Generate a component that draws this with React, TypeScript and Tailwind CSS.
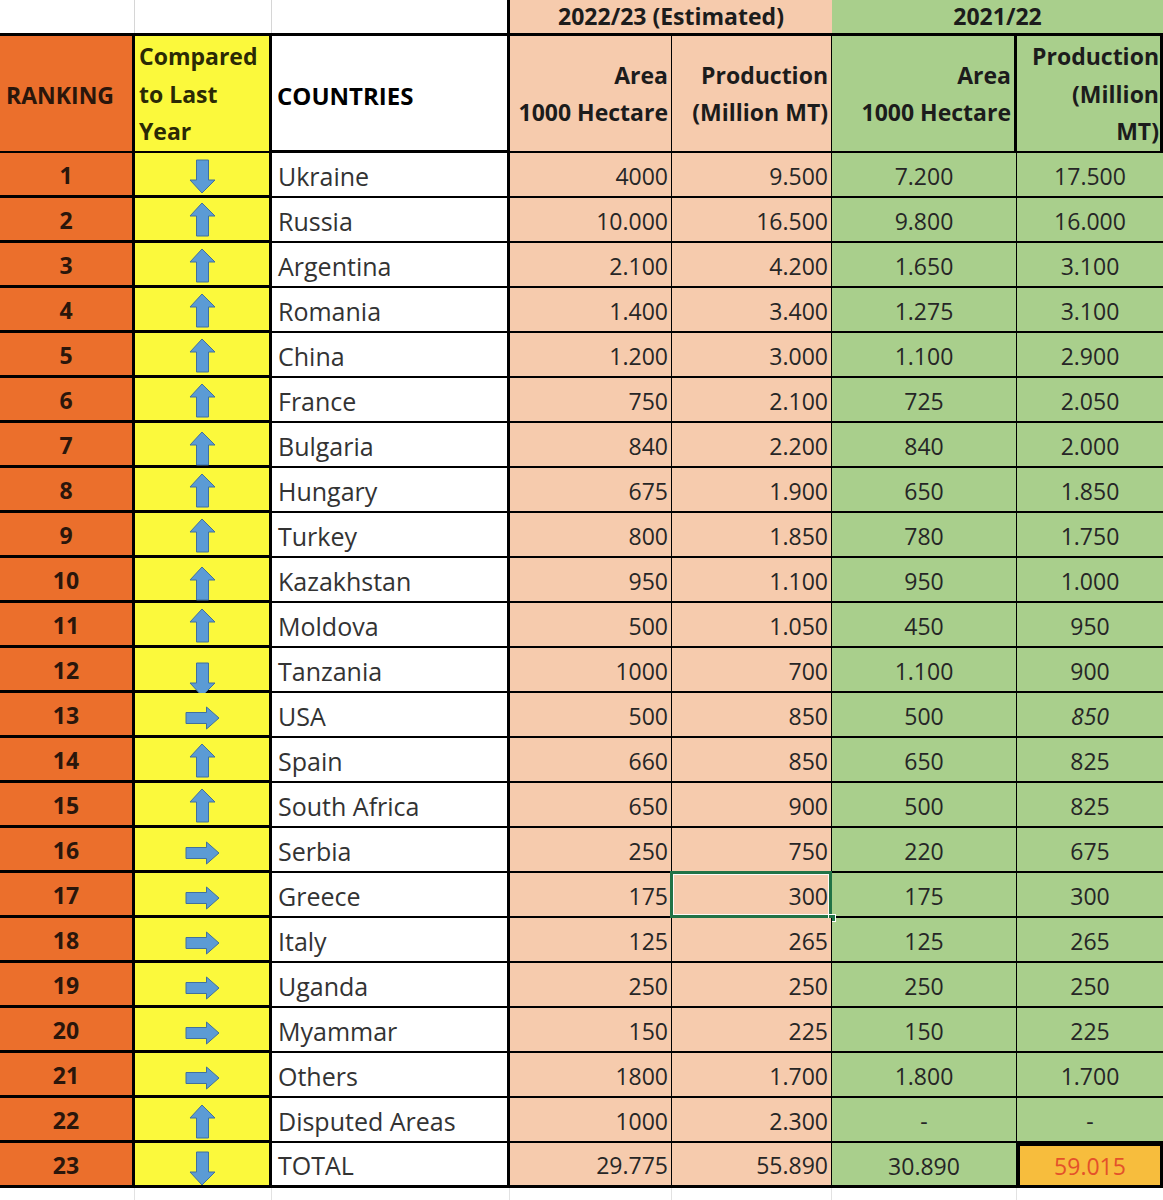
import type { ReactNode } from "react";

type Dir = "up" | "down" | "right";

type Row = {
  rank: number;
  dir: Dir;
  country: string;
  area23: string;
  prod23: string;
  area22: string;
  prod22: string;
  // nudges the arrow down a little, like the hand-placed shapes in the sheet
  nudge: string;
};

const ROWS: Row[] = [
  { rank: 1, dir: "down", country: "Ukraine", area23: "4000", prod23: "9.500", area22: "7.200", prod22: "17.500", nudge: "pt-[6px]" },
  { rank: 2, dir: "up", country: "Russia", area23: "10.000", prod23: "16.500", area22: "9.800", prod22: "16.000", nudge: "pt-[4px]" },
  { rank: 3, dir: "up", country: "Argentina", area23: "2.100", prod23: "4.200", area22: "1.650", prod22: "3.100", nudge: "pt-[5px]" },
  { rank: 4, dir: "up", country: "Romania", area23: "1.400", prod23: "3.400", area22: "1.275", prod22: "3.100", nudge: "pt-[5px]" },
  { rank: 5, dir: "up", country: "China", area23: "1.200", prod23: "3.000", area22: "1.100", prod22: "2.900", nudge: "pt-[5px]" },
  { rank: 6, dir: "up", country: "France", area23: "750", prod23: "2.100", area22: "725", prod22: "2.050", nudge: "pt-[5px]" },
  { rank: 7, dir: "up", country: "Bulgaria", area23: "840", prod23: "2.200", area22: "840", prod22: "2.000", nudge: "pt-[8px]" },
  { rank: 8, dir: "up", country: "Hungary", area23: "675", prod23: "1.900", area22: "650", prod22: "1.850", nudge: "pt-[5px]" },
  { rank: 9, dir: "up", country: "Turkey", area23: "800", prod23: "1.850", area22: "780", prod22: "1.750", nudge: "pt-[5px]" },
  { rank: 10, dir: "up", country: "Kazakhstan", area23: "950", prod23: "1.100", area22: "950", prod22: "1.000", nudge: "pt-[8px]" },
  { rank: 11, dir: "up", country: "Moldova", area23: "500", prod23: "1.050", area22: "450", prod22: "950", nudge: "pt-[5px]" },
  { rank: 12, dir: "down", country: "Tanzania", area23: "1000", prod23: "700", area22: "1.100", prod22: "900", nudge: "pt-[14px]" },
  { rank: 13, dir: "right", country: "USA", area23: "500", prod23: "850", area22: "500", prod22: "850", nudge: "pt-[13px]" },
  { rank: 14, dir: "up", country: "Spain", area23: "660", prod23: "850", area22: "650", prod22: "825", nudge: "pt-[5px]" },
  { rank: 15, dir: "up", country: "South Africa", area23: "650", prod23: "900", area22: "500", prod22: "825", nudge: "pt-[5px]" },
  { rank: 16, dir: "right", country: "Serbia", area23: "250", prod23: "750", area22: "220", prod22: "675", nudge: "pt-[13px]" },
  { rank: 17, dir: "right", country: "Greece", area23: "175", prod23: "300", area22: "175", prod22: "300", nudge: "pt-[13px]" },
  { rank: 18, dir: "right", country: "Italy", area23: "125", prod23: "265", area22: "125", prod22: "265", nudge: "pt-[13px]" },
  { rank: 19, dir: "right", country: "Uganda", area23: "250", prod23: "250", area22: "250", prod22: "250", nudge: "pt-[13px]" },
  { rank: 20, dir: "right", country: "Myammar", area23: "150", prod23: "225", area22: "150", prod22: "225", nudge: "pt-[13px]" },
  { rank: 21, dir: "right", country: "Others", area23: "1800", prod23: "1.700", area22: "1.800", prod22: "1.700", nudge: "pt-[13px]" },
  { rank: 22, dir: "up", country: "Disputed Areas", area23: "1000", prod23: "2.300", area22: "-", prod22: "-", nudge: "pt-[6px]" },
  { rank: 23, dir: "down", country: "TOTAL", area23: "29.775", prod23: "55.890", area22: "30.890", prod22: "59.015", nudge: "pt-[8px]" },
];

const GRID = "grid grid-cols-[135px_137px_238px_162px_160px_185px_146px]";
const ORANGE = "bg-[#eb6f2c]";
const YELLOW = "bg-[#fbf93c]";
const PEACH = "bg-[#f6cbad]";
const GREEN = "bg-[#a9cf8c]";
const FILL = "#5b9bd5";
const EDGE = "#41719c";

function Arrow({ dir }: { dir: Dir }) {
  if (dir === "right") {
    return (
      <svg width="35" height="24" viewBox="0 0 35 24" aria-hidden>
        <path d="M1 6.5 H21.5 V1 L34 12 L21.5 23 V17.5 H1 Z" fill={FILL} stroke={EDGE} strokeWidth="1" />
      </svg>
    );
  }
  const path = dir === "up"
    ? "M13 1 L26 14 H19.5 V34 H7.5 V14 H1 Z"
    : "M7.5 1 H19.5 V21 H26 L13 34 L1 21 H7.5 Z";
  return (
    <svg width="27" height="35" viewBox="0 0 27 35" aria-hidden>
      <path d={path} fill={FILL} stroke={EDGE} strokeWidth="1" />
    </svg>
  );
}

function HeadLines({ lines, className }: { lines: string[]; className: string }) {
  return (
    <div className={className}>
      {lines.map((l) => (
        <div key={l}>{l}</div>
      ))}
    </div>
  );
}

function Cell({ className, children }: { className: string; children?: ReactNode }) {
  return <div className={`flex h-[45px] items-center ${className}`}>{children}</div>;
}

export default function App() {
  return (
    <div className="h-[1200px] w-[1163px] overflow-hidden bg-white font-['Open_Sans',sans-serif] text-[#262626]">
      {/* year band */}
      <div className={`${GRID} h-[36px] border-b-[3px] border-black text-[23px] font-bold leading-none text-[#1c1c1c]`}>
        <div className="border-r border-[#d6d6d6]" />
        <div className="border-r border-[#d6d6d6]" />
        <div className="border-r-[3px] border-black" />
        <div className={`col-span-2 flex items-center justify-center ${PEACH}`}>2022/23 (Estimated)</div>
        <div className={`col-span-2 flex items-center justify-center ${GREEN}`}>2021/22</div>
      </div>

      {/* column headings */}
      <div className={`${GRID} h-[117px] border-b-[3px] border-black text-[23px] font-bold leading-[37.5px] text-[#1c1c1c]`}>
        <div className={`flex items-center border-r-[3px] border-black pl-[6px] pt-[4px] text-[23px] text-[#2a160b] ${ORANGE}`}>RANKING</div>
        <HeadLines
          lines={["Compared", "to Last", "Year"]}
          className={`border-r-[3px] border-black pl-[4px] pt-[2px] text-[#2b2a05] ${YELLOW}`}
        />
        <div className="flex items-center border-r-[3px] border-black pl-[5px] pt-[4px] text-[24px] text-black">COUNTRIES</div>
        <HeadLines
          lines={["Area", "1000 Hectare"]}
          className={`flex flex-col justify-center border-r border-black pr-[3px] pt-[2px] text-right ${PEACH}`}
        />
        <HeadLines
          lines={["Production", "(Million MT)"]}
          className={`flex flex-col justify-center border-r border-black pr-[3px] pt-[2px] text-right ${PEACH}`}
        />
        <HeadLines
          lines={["Area", "1000 Hectare"]}
          className={`flex flex-col justify-center border-r-[3px] border-black pr-[3px] pt-[2px] text-right ${GREEN}`}
        />
        <HeadLines
          lines={["Production", "(Million", "MT)"]}
          className={`border-r-[3px] border-black pr-[1px] pt-[2px] text-right ${GREEN}`}
        />
      </div>

      {/* data */}
      {ROWS.map((r) => {
        const last = r.rank === ROWS.length;
        const thinB = last ? "border-b-[3px]" : "border-b-2";
        return (
          <div key={r.rank} className={`${GRID} text-[23px] leading-none`}>
            <Cell className={`justify-center border-r-[3px] border-b-[3px] border-black pt-[3px] text-[23px] font-bold text-[#2a160b] ${ORANGE}`}>
              {r.rank}
            </Cell>
            <Cell className={`items-start justify-center border-r-[3px] border-b-[3px] border-black ${r.nudge} ${YELLOW}`}>
              <Arrow dir={r.dir} />
            </Cell>
            <Cell className={`border-r-[3px] ${thinB} border-black pl-[6px] pt-[3px] text-[25px] text-[#333]`}>
              {r.country}
            </Cell>
            <Cell className={`justify-end border-r ${thinB} border-black pr-[3px] pt-[3px] ${PEACH}`}>
              {r.area23}
            </Cell>
            <div className={`relative flex h-[45px] items-center justify-end border-r ${thinB} border-black pr-[3px] pt-[3px] ${PEACH}`}>
              {r.prod23}
              {r.rank === 17 && (
                <>
                  <div className="pointer-events-none absolute -top-[2px] -left-[2px] -right-px -bottom-[2px] border-[3px] border-[#217346]">
                    <div className="h-full w-full border border-white/90" />
                  </div>
                  <div className="absolute -right-[5px] -bottom-[6px] h-[8px] w-[8px] border border-white bg-[#217346]" />
                </>
              )}
            </div>
            <Cell className={`justify-center border-r ${thinB} border-black pt-[4px] ${GREEN}`}>
              {r.area22}
            </Cell>
            {last ? (
              <Cell className="justify-center border-[3px] border-black bg-[#f7bd3d] pt-[2px] text-[#e4512a]">
                {r.prod22}
              </Cell>
            ) : (
              <Cell className={`justify-center ${thinB} border-black pt-[4px] ${GREEN} ${r.rank === 13 ? "italic" : ""}`}>
                {r.prod22}
              </Cell>
            )}
          </div>
        );
      })}

      {/* empty row peeking below the sheet */}
      <div className={`${GRID} h-[20px]`}>
        <div className="border-r border-[#e2e2e2]" />
        <div className="border-r border-[#e2e2e2]" />
        <div className="border-r border-[#e2e2e2]" />
        <div className="border-r border-[#e2e2e2]" />
        <div className="border-r border-[#e2e2e2]" />
        <div className="border-r border-[#e2e2e2]" />
        <div />
      </div>
    </div>
  );
}
